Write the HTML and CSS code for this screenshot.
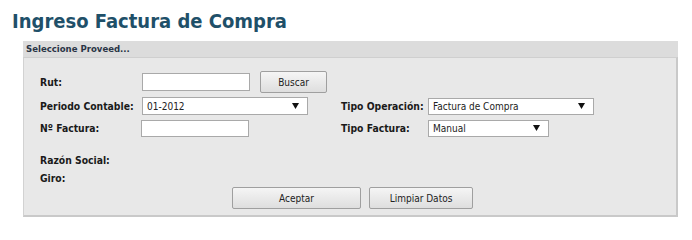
FILE: index.html
```html
<!DOCTYPE html>
<html lang="es">
<head>
<meta charset="utf-8">
<title>Ingreso Factura de Compra</title>
<link rel="stylesheet" href="styles.css">
</head>
<body>
<h1 class="title">Ingreso Factura de Compra</h1>
<div class="box">
  <div class="box-head">Seleccione Proveed...</div>
  <div class="panel">
    <div class="form">
      <label class="lbl">Rut:</label>
      <div class="field-group">
        <input class="txt txt-rut" type="text">
        <button class="btn btn-buscar" type="button">Buscar</button>
      </div>

      <label class="lbl">Periodo Contable:</label>
      <div class="select sel-periodo"><span>01-2012</span><svg class="arrow" width="7" height="6" viewBox="0 0 7 6"><path d="M0 0H7L3.5 6Z"/></svg></div>
      <label class="lbl lbl-2">Tipo Operación:</label>
      <div class="select sel-operacion"><span>Factura de Compra</span><svg class="arrow" width="7" height="6" viewBox="0 0 7 6"><path d="M0 0H7L3.5 6Z"/></svg></div>

      <label class="lbl">Nº Factura:</label>
      <input class="txt txt-factura" type="text">
      <label class="lbl lbl-2">Tipo Factura:</label>
      <div class="select sel-tipo"><span>Manual</span><svg class="arrow" width="7" height="6" viewBox="0 0 7 6"><path d="M0 0H7L3.5 6Z"/></svg></div>
    </div>
    <div class="info">
      <div class="lbl">Razón Social:</div>
      <div class="lbl">Giro:</div>
    </div>
    <div class="actions">
      <button class="btn btn-aceptar" type="button">Aceptar</button>
      <button class="btn btn-limpiar" type="button">Limpiar Datos</button>
    </div>
  </div>
</div>
</body>
</html>
```
FILE: styles.css
```css
* { box-sizing: border-box; }

body {
  margin: 0;
  background: #ffffff;
  font-family: "DejaVu Sans Condensed", "DejaVu Sans", sans-serif;
  font-stretch: condensed;
  color: #222222;
}

.title {
  margin: 0;
  padding: 10px 0 0 12px;
  height: 41px;
  font-size: 20px;
  line-height: 22px;
  font-weight: bold;
  color: #1f5069;
}

.box {
  margin-left: 23px;
  width: 655px;
}

.box-head {
  height: 16px;
  padding-left: 3px;
  background: #dcdcdc;
  font-size: 9.5px;
  line-height: 16px;
  font-weight: bold;
  color: #2a3546;
}

.panel {
  height: 160px;
  padding: 13px 17px 0 16px;
  background: #e8e8e8;
  border: 1px solid #d2d2d2;
  border-right: 2px solid #c9c9c9;
  border-bottom: 2px solid #c9c9c9;
  border-top-color: #cfcfcf;
}

.form {
  display: grid;
  grid-template-columns: 102px 166px 33px 87px auto;
  grid-template-rows: 22px 18px 18px;
  row-gap: 4px;
  align-items: center;
}

.field-group {
  grid-column: 2 / 6;
  display: flex;
  align-items: center;
}

.lbl {
  font-size: 10.3px;
  font-weight: bold;
  color: #1a1a1a;
}

.lbl-2 { grid-column: 4; }

.txt {
  height: 18px;
  margin: 0;
  padding: 0 3px;
  background: #ffffff;
  border: 1px solid #a9a9a9;
  border-radius: 0;
  outline: none;
}

.txt-rut { width: 108px; }
.txt-factura { width: 108px; height: 17px; margin-left: -1px; }

.select {
  display: flex;
  align-items: center;
  justify-content: space-between;
  height: 18px;
  padding: 0 8px 0 4px;
  background: #ffffff;
  border: 1px solid #a9a9a9;
  font-size: 10px;
  color: #222222;
}

.select .arrow { fill: #111111; flex: none; }

.sel-periodo { width: 166px; }
.sel-operacion { width: 166px; height: 17px; }
.sel-tipo { width: 121px; height: 17px; }

.info {
  display: flex;
  flex-direction: column;
  margin-top: 14px;
}

.info .lbl {
  height: 18px;
  line-height: 18px;
}

.btn {
  height: 22px;
  margin: 0;
  padding: 0;
  font-family: "DejaVu Sans Condensed", "DejaVu Sans", sans-serif;
  font-stretch: condensed;
  font-size: 10px;
  color: #222222;
  background: linear-gradient(#f5f5f5, #dedede);
  border: 1px solid #9f9f9f;
  border-radius: 2px;
}

.btn-buscar { width: 67px; margin-left: 10px; }

.actions {
  display: flex;
  justify-content: center;
  gap: 8px;
  margin-top: 0;
  padding-left: 6px;
}

.btn-aceptar { width: 129px; }
.btn-limpiar { width: 104px; }
```
